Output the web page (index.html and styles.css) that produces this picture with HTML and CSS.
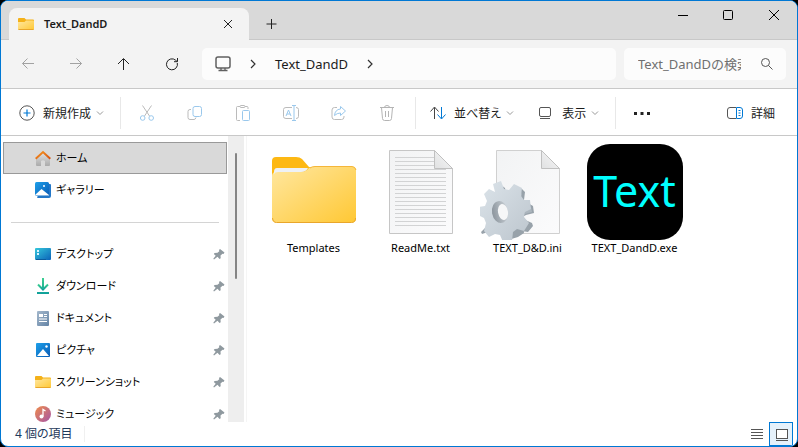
FILE: index.html
```html
<!DOCTYPE html>
<html lang="ja">
<head>
<meta charset="utf-8">
<meta name="viewport" content="width=device-width, initial-scale=1">
<title>Text_DandD</title>
<link rel="stylesheet" href="styles.css">
</head>
<body>
<svg class="defs" aria-hidden="true">
  <defs>
    <linearGradient id="gold" x1="0" y1="0" x2="1" y2="1"><stop offset="0" stop-color="#ffe7a0"/><stop offset="1" stop-color="#ffc834"/></linearGradient>
    <linearGradient id="paper" x1="0" y1="0" x2="1" y2="1"><stop offset="0" stop-color="#f2f3f4"/><stop offset="1" stop-color="#fbfbfc"/></linearGradient>
    <linearGradient id="fold" x1="0" y1="1" x2="1" y2="0"><stop offset="0" stop-color="#e0e1e2"/><stop offset="1" stop-color="#f8f8f8"/></linearGradient>
    <linearGradient id="blue" x1="0" y1="0" x2="1" y2="1"><stop offset="0" stop-color="#1da0ea"/><stop offset="1" stop-color="#0a5bb5"/></linearGradient>
    <linearGradient id="teal" x1="0" y1="0" x2="1" y2="1"><stop offset="0" stop-color="#35c8dc"/><stop offset="1" stop-color="#0b62b8"/></linearGradient>
    <linearGradient id="green" x1="0" y1="0" x2="0" y2="1"><stop offset="0" stop-color="#3ccf91"/><stop offset="1" stop-color="#0f9f9a"/></linearGradient>
    <linearGradient id="slate" x1="0" y1="0" x2="1" y2="1"><stop offset="0" stop-color="#a4b8cc"/><stop offset="1" stop-color="#6484a6"/></linearGradient>
    <linearGradient id="music" x1="0" y1="0" x2="1" y2="1"><stop offset="0" stop-color="#f08c4a"/><stop offset="1" stop-color="#a455a8"/></linearGradient>
    <linearGradient id="wall" x1="0" y1="0" x2="0" y2="1"><stop offset="0" stop-color="#e4e4e4"/><stop offset="1" stop-color="#aaa"/></linearGradient>
    <linearGradient id="roof" x1="0" y1="0" x2="1" y2="1"><stop offset="0" stop-color="#f8961e"/><stop offset="1" stop-color="#d45113"/></linearGradient>
    <linearGradient id="steel" x1="0" y1="0" x2="1" y2="1"><stop offset="0" stop-color="#dce4ea"/><stop offset="1" stop-color="#bcc5cd"/></linearGradient>
    <linearGradient id="hole" x1="0" y1="0" x2="1" y2="0"><stop offset="0" stop-color="#8c959d"/><stop offset="1" stop-color="#c8cfd5"/></linearGradient>
  </defs>
  <symbol id="folder" viewBox="0 0 16 16">
    <path d="M0 3q0-1 1-1h5.500l1.500 1.500H15q1 0 1 1V7H0z" fill="#f4b119" stroke="none"/>
    <path d="M0 6h6.500L8 4.500h7q1 0 1 1V13q0 1-1 1H1q-1 0-1-1z" fill="url(#gold)" stroke="none"/>
    <path d="M.5 13.500h15" stroke="#e9a62b"/>
  </symbol>
  <symbol id="chevron" viewBox="0 0 8 8"><path d="M1 2.500l3 3 3-3" fill="none" stroke="#999"/></symbol>
  <symbol id="arrow" viewBox="0 0 8 12"><path d="M2 2l4 4-4 4" fill="none" stroke="#333" stroke-width="1.200"/></symbol>
  <symbol id="pin" viewBox="0 0 12 12"><path d="M7 1l4.500 3.500-1 1.500-1-.2-2 1.700.2 2.700-1.200.8-2-2.200L1 11.500l-.7-.7 2.400-3L.8 6l.8-1.100 2.900-.1 1.800-1.600-.3-1.200z" fill="#8f999f"/></symbol>
</svg>
<div class="window">
  <header class="titlebar">
    <div class="tab">
      <svg class="icon"><use href="#folder"/></svg>
      <span class="tab-title">Text_DandD</span>
      <button class="tab-close" aria-label="タブを閉じる"><svg class="icon" viewBox="0 0 16 16"><path d="M4 4l8 8M12 4l-8 8"/></svg></button>
    </div>
    <button class="new-tab" aria-label="新しいタブ"><svg class="icon" viewBox="0 0 16 16"><path d="M7.500 3v10M2.500 8h10"/></svg></button>
    <div class="caption">
      <button aria-label="最小化"><svg class="icon" viewBox="0 0 16 16"><path d="M4 8.500h10"/></svg></button>
      <button aria-label="最大化"><svg class="icon" viewBox="0 0 16 16"><rect x="3.500" y="3.500" width="9" height="9" rx="1"/></svg></button>
      <button aria-label="閉じる"><svg class="icon" viewBox="0 0 16 16"><path d="M3 3l10 10M13 3L3 13"/></svg></button>
    </div>
  </header>

  <nav class="navbar">
    <button class="nav-button dim" aria-label="戻る" disabled><svg class="icon" viewBox="0 0 16 16"><path d="M14 7.500H2.500M7.500 2.500l-5 5 5 5"/></svg></button>
    <button class="nav-button dim" aria-label="進む" disabled><svg class="icon" viewBox="0 0 16 16"><path d="M2 7.500h11.500M8.500 2.500l5 5-5 5"/></svg></button>
    <button class="nav-button" aria-label="上へ"><svg class="icon" viewBox="0 0 16 16"><path d="M7.500 14V3M2 8l5.500-5.500L13 8"/></svg></button>
    <button class="nav-button" aria-label="最新の情報に更新"><svg class="icon" viewBox="0 0 16 16"><path d="M13.300 7a5.500 5.500 0 1 1-1.700-2.800L13 5.500M13.500 2v3.700H10"/></svg></button>
    <div class="address">
      <svg class="icon" viewBox="0 0 16 16"><rect x="1" y="1" width="14" height="11" rx="2" stroke="#606060" stroke-width="1.500"/><path d="M6 12v2.500M10 12v2.500M3.500 14.500h9" stroke="#606060" stroke-width="1.300"/></svg>
      <svg class="crumb-arrow"><use href="#arrow"/></svg>
      <a class="crumb" href="#">Text_DandD</a>
      <svg class="crumb-arrow"><use href="#arrow"/></svg>
    </div>
    <div class="search">
      <input type="text" aria-label="検索" placeholder="Text_DandDの検索">
      <svg class="icon" viewBox="0 0 16 16"><circle cx="6.500" cy="6.500" r="4"/><path d="M9.500 9.500l4 4"/></svg>
    </div>
  </nav>

  <div class="toolbar">
    <button class="command"><svg class="icon" viewBox="0 0 16 16"><circle cx="8" cy="8" r="7.200" stroke="#555"/><path d="M8 4.500v7M4.500 8h7" stroke="#0078d4" stroke-width="1.200"/></svg><span>新規作成</span><svg class="chevron"><use href="#chevron"/></svg></button>
    <span class="separator"></span>
    <button class="tool" aria-label="切り取り" disabled><svg class="icon" viewBox="0 0 16 16"><path d="M3.500.5l7 10.500M12.500.5L5.500 11" stroke="#bbb"/><circle cx="3.700" cy="13" r="2.300" stroke="#9ac8ec"/><circle cx="12.200" cy="13" r="2.300" stroke="#9ac8ec"/></svg></button>
    <button class="tool" aria-label="コピー" disabled><svg class="icon" viewBox="0 0 16 16"><path d="M4 4.500H3q-2 0-2 2v6q0 2 2 2h4q1.500 0 2-2" stroke="#bbb"/><rect x="6" y="1.500" width="8.500" height="10" rx="2" stroke="#9ac8ec"/></svg></button>
    <button class="tool" aria-label="貼り付け" disabled><svg class="icon" viewBox="0 0 16 16"><path d="M5 15.500H2.500q-1 0-1-1v-12q0-1 1-1H5M10 1.500h2q1 0 1 1V4" stroke="#bbb"/><rect x="5" y=".5" width="5" height="2" rx="1" stroke="#bbb"/><rect x="7.500" y="5.500" width="7" height="10" rx="1" stroke="#9ac8ec"/></svg></button>
    <button class="tool" aria-label="名前の変更" disabled><svg class="icon" viewBox="0 0 16 16"><path d="M9 2.500H3q-2.500 0-2.500 2v7q0 2 2.500 2h6M13 2.500q2.500 0 2.500 2v7q0 2-2.500 2" stroke="#bbb"/><path d="M3 11l2.500-6L8 11M4 9h3M11 1v14M9 .5h4M9 15.500h4" stroke="#9ac8ec"/></svg></button>
    <button class="tool" aria-label="共有" disabled><svg class="icon" viewBox="0 0 16 16"><path d="M6 2.500H3.500Q1 2.500 1 5v7q0 2.500 2.500 2.500h7Q13 14.500 13 12v-1" stroke="#bbb"/><path d="M9.500 1.500l5 4.500-5 4.500V8Q6 8 3.500 10.500 4 4.500 9.500 4z" stroke="#9ac8ec"/></svg></button>
    <button class="tool" aria-label="削除" disabled><svg class="icon" viewBox="0 0 16 16"><path d="M1 2.500h14M5.500 2.500q0-2 2.500-2t2.500 2M2.500 2.500l1 11q.2 2 2 2h5q1.800 0 2-2l1-11M6.500 6v6M9.500 6v6" stroke="#b4b4b4"/></svg></button>
    <span class="separator"></span>
    <button class="command"><svg class="icon" viewBox="0 0 16 16"><path d="M4.500 14V2.500M.5 6.500l4-4.500 4 4.500" stroke="#444"/><path d="M11.500 2v11.500M7.500 9.500l4 4.500 4-4.500" stroke="#0078d4"/></svg><span>並べ替え</span><svg class="chevron"><use href="#chevron"/></svg></button>
    <button class="command"><svg class="icon" viewBox="0 0 16 16"><rect x="1.500" y="2.500" width="11" height="9" rx="1.500" stroke="#555"/><path d="M2 13.500h10" stroke="#555"/></svg><span>表示</span><svg class="chevron"><use href="#chevron"/></svg></button>
    <span class="separator"></span>
    <button class="tool" aria-label="もっと見る"><svg class="icon" viewBox="0 0 16 16"><path d="M0 7h3v3H0zM6.500 7h3v3h-3zM13 7h3v3h-3z" fill="#222" stroke="none"/></svg></button>
    <button class="command details"><svg class="icon" viewBox="0 0 16 16"><path d="M9 2.500H3q-2.500 0-2.500 2.500v6q0 2.500 2.500 2.500h6" stroke="#555"/><path d="M9.500 2.500H13q2.500 0 2.500 2.500v6q0 2.500-2.500 2.500H9.500zM11.500 5.500h2M11.500 8h2M11.500 10.500h2" stroke="#0078d4"/></svg><span>詳細</span></button>
  </div>

  <div class="content">
    <aside class="sidebar">
      <div class="places">
        <a class="place selected" href="#"><svg class="icon" viewBox="0 0 16 16"><path d="M1 8l7-6 7 6v7q0 1-1 1h-4v-5q-2-1.500-4 0v5H2q-1 0-1-1z" fill="url(#wall)" stroke="none"/><path d="M.7 8.800L8 2l7.300 6.800" stroke="url(#roof)" stroke-width="2"/></svg><span>ホーム</span></a>
        <a class="place" href="#"><svg class="icon" viewBox="0 0 16 16"><path d="M14 2h1q1 0 1 1v11q0 2-2 2H3q-1 0-1-1z" fill="#2377c8" stroke="none"/><rect width="14" height="14" rx="1.500" fill="url(#blue)" stroke="none"/><path d="M0 13l6.500-6L14 13v.5H0z" fill="#fff" stroke="none"/><circle cx="9" cy="4" r="1" fill="#fff" stroke="none"/></svg><span>ギャラリー</span></a>
        <hr class="divider">
        <a class="place" href="#"><svg class="icon" viewBox="0 0 16 16"><rect y="2" width="16" height="12" rx="1" fill="url(#teal)" stroke="none"/><path d="M2 4h2v2H2zM2 7h2v2H2z" fill="#d8f4ff" stroke="none"/><path d="M1 13.500h10" stroke="#0b5c9e"/></svg><span>デスクトップ</span><svg class="pin"><use href="#pin"/></svg></a>
        <a class="place" href="#"><svg class="icon" viewBox="0 0 16 16"><path d="M3 6.500l5 5 5-5" stroke="url(#green)" stroke-width="2"/><path d="M2 14h12v2H2zM7 0h2v11H7z" fill="url(#green)" stroke="none"/></svg><span>ダウンロード</span><svg class="pin"><use href="#pin"/></svg></a>
        <a class="place" href="#"><svg class="icon" viewBox="0 0 16 16"><rect x="2" y="1" width="12" height="15" rx="1" fill="url(#slate)" stroke="none"/><path d="M4 4h4v3H4zM9 4h3v1H9zM9 6h3v1H9zM4 8.500h8v1H4zM4 11h8v1H4z" fill="#fff" stroke="none"/></svg><span>ドキュメント</span><svg class="pin"><use href="#pin"/></svg></a>
        <a class="place" href="#"><svg class="icon" viewBox="0 0 16 16"><rect x="1" y="1" width="14" height="14" rx="1" fill="url(#blue)" stroke="none"/><path d="M2 14l6-7 6 7z" fill="#fff" stroke="none"/><circle cx="11.500" cy="4.500" r="1.200" fill="#fff" stroke="none"/></svg><span>ピクチャ</span><svg class="pin"><use href="#pin"/></svg></a>
        <a class="place" href="#"><svg class="icon"><use href="#folder"/></svg><span>スクリーンショット</span><svg class="pin"><use href="#pin"/></svg></a>
        <a class="place" href="#"><svg class="icon" viewBox="0 0 16 16"><circle cx="8" cy="8" r="8" fill="url(#music)" stroke="none"/><circle cx="6.500" cy="10.500" r="2" fill="#fff" stroke="none"/><path d="M8 10.500V3.500L10.500 5" stroke="#fff" stroke-width="1.300"/></svg><span>ミュージック</span><svg class="pin"><use href="#pin"/></svg></a>
      </div>
      <div class="scrollbar"><div class="thumb"></div></div>
    </aside>
    <main class="files">
      <a class="file" href="#">
        <svg class="picture" viewBox="0 0 96 96"><path d="M6 17q0-4 4-4h20q4 0 6 2l7 8h43q4 0 4 4v10H6z" fill="#fdb813"/><path d="M6 32q0-4 4-4h25q4 0 6-2l2-2q2-1.500 5-1.500h38q4 0 4 4v48q0 4-4 4H10q-4 0-4-4z" fill="url(#gold)"/><path d="M8 30v-2q0-4 3-4h31q-2 4-7 4H12q-3 0-4 2z" fill="#eef1f6"/><path d="M6.500 74q.5 4.500 4 4.500h75q4 0 4-4.500" fill="none" stroke="#e9a62b"/><path d="M44 24q2-1.500 5-1.500h37q3 0 4 3.500" fill="none" stroke="#f5b63a"/></svg>
        <span>Templates</span>
      </a>
      <a class="file" href="#">
        <svg class="picture" viewBox="0 0 96 96"><path d="M16.500 6.500h45l18 18v65h-63z" fill="url(#paper)" stroke="#c6c6c6"/><path d="M22 13.500h40M22 17.500h40M22 21.500h40M22 25.500h51M22 29.500h51M22 33.500h51M22 37.500h51M22 41.500h51M22 45.500h51M22 49.500h51M22 53.500h51M22 57.500h51M22 61.500h51M22 65.500h51M22 69.500h51M22 73.500h51M22 77.500h51M22 81.500h51" stroke="#d2d3d4"/><path d="M61.500 6.500v18h18z" fill="url(#fold)" stroke="#c0c0c0"/></svg>
        <span>ReadMe.txt</span>
      </a>
      <a class="file" href="#">
        <svg class="picture" viewBox="0 0 96 96"><path d="M16.500 6.500h45l18 18v65h-63z" fill="url(#paper)" stroke="#d0d0d0"/><path d="M61.500 6.500v18h18z" fill="url(#fold)" stroke="#c0c0c0"/>
          <path d="M16 43l5-2 4 3 2 9-6-1zM32 49l2-5 8 1 3 3-1 8-6 2zM39 62l9-3 5 3 1 7-8 2-5 3zM38 79l5-4 9 4 1 3-5 6-6-1-4-5zM28 87l3-4 12-1 1 7-6 4-10 3zM8 88l-6 2-1-2 6-6z" fill="#98a2aa"/>
          <path d="M36 47l5 1 1 3-2 6-4-1zM45 65l6-2 1 5-7 2z" fill="#abb5bd"/>
          <path d="M11 46l8-3 3 8 5 1 5-6 8 4-1 8 3 4 6 0 1 9-6 3-1 5 5 6-5 8-7-2-4 3-1 9-9 1-3-7-5-1-6 3-5-6 2-8-2-5-6-3 1-8 6-1 2-5-3-7 5-5 6 3z" transform="translate(2 -6)" fill="url(#steel)"/>
          <ellipse cx="20" cy="68" rx="8" ry="11" transform="rotate(-10 20 68)" fill="url(#hole)"/><ellipse cx="23" cy="68" rx="5" ry="8" transform="rotate(-10 23 68)" fill="#f6f7f8"/></svg>
        <span>TEXT_D&amp;D.ini</span>
      </a>
      <a class="file" href="#">
        <div class="app-icon">Text</div>
        <span>TEXT_DandD.exe</span>
      </a>
    </main>
  </div>

  <footer class="statusbar">
    <span class="count">4 個の項目</span>
    <div class="views">
      <button aria-label="詳細表示"><svg class="icon" viewBox="0 0 16 16"><path d="M2 3.500h12M2 6.500h12M2 9.500h12M2 12.500h12" stroke="#555"/></svg></button>
      <button class="active" aria-label="大きい縮小版"><svg class="icon" viewBox="0 0 16 16"><rect x="3.500" y="3.500" width="11" height="9" fill="#fff" stroke="#555"/><path d="M3 14.500h12" stroke="#555"/></svg></button>
    </div>
  </footer>
</div>
</body>
</html>
```
FILE: styles.css
```css
* { box-sizing: border-box; }

body {
  margin: 0;
  background: #000;
  color: #1b1b1b;
  font: 12px/16px "Noto Sans", "Noto Sans CJK JP", sans-serif;
}

button {
  display: flex;
  align-items: center;
  justify-content: center;
  padding: 0;
  border: 0;
  background: none;
  color: inherit;
  font: inherit;
}

a { color: inherit; text-decoration: none; }

.defs { position: absolute; width: 0; height: 0; }

.icon {
  flex: none;
  width: 16px;
  height: 16px;
  fill: none;
  stroke: #222;
}

.window {
  display: flex;
  flex-direction: column;
  height: 100vh;
  border: 1px solid #0078d4;
  border-radius: 8px;
  background: #fff;
  overflow: hidden;
}

.titlebar {
  display: flex;
  flex: none;
  height: 39px;
  padding-left: 8px;
  background: #d9d9d9;
  box-shadow: inset 0 -1px #c8c8c8;
}

.tab {
  display: flex;
  align-items: center;
  gap: 10px;
  width: 240px;
  margin-top: 7px;
  padding: 0 13px 0 9px;
  border-radius: 8px 8px 0 0;
  background: #f3f3f3;
}

.tab-title { flex: 1; font-size: 11px; font-weight: 600; }

.new-tab { width: 46px; padding-top: 7px; }

.caption { display: flex; height: 28px; margin-left: auto; }
.caption button { width: 46px; }
.caption .icon { stroke: #000; }

.navbar {
  display: flex;
  flex: none;
  align-items: center;
  height: 49px;
  padding: 0 11px 0 3px;
  border-bottom: 1px solid #c8c8c8;
  background: #f3f3f3;
}

.nav-button { width: 48px; height: 32px; }
.dim .icon { stroke: #a2a2a2; }

.address {
  display: flex;
  flex: 1;
  align-items: center;
  height: 32px;
  margin: 0 8px 0 6px;
  padding-left: 13px;
  border-radius: 5px;
  background: #fcfcfc;
}

.crumb-arrow { width: 8px; height: 12px; margin: 0 18px; }
.crumb { font-size: 13px; }

.search {
  display: flex;
  align-items: center;
  gap: 18px;
  width: 162px;
  height: 32px;
  padding: 0 11px 0 14px;
  border-radius: 5px;
  background: #fcfcfc;
}

.search input {
  flex: 1;
  min-width: 0;
  height: 24px;
  padding: 0;
  border: 0;
  outline: 0;
  background: none;
  font: 13px/24px "Noto Sans", "Noto Sans CJK JP", sans-serif;
}

.search input::placeholder { color: #707070; }
.search .icon { stroke: #555; }

.toolbar {
  display: flex;
  flex: none;
  align-items: center;
  height: 47px;
  padding: 2px 22px 0 6px;
  border-bottom: 1px solid #c8c8c8;
  font-feature-settings: "palt";
}

.command { gap: 8px; height: 32px; padding: 0 12px; }
.command span { padding-top: 2px; }
.command .chevron { margin-left: -3px; }
.chevron { width: 8px; height: 8px; }
.tool { width: 48px; height: 32px; }
.separator { width: 1px; height: 32px; margin: 0 2px 0 4px; background: #e8e8e8; }
.details { margin-left: auto; padding: 0; }

.content { display: flex; flex: 1; min-height: 0; }

.sidebar {
  display: flex;
  flex: none;
  width: 246px;
  border-right: 1px solid #f5f5f5;
  padding-right: 2px;
}

.places { flex: 1; overflow: hidden; padding: 6px 1px 0 2px; }

.place {
  display: flex;
  align-items: center;
  gap: 5px;
  height: 32px;
  padding: 0 1px 0 31px;
  border: 1px solid transparent;
  color: #000;
  font-size: 11px;
  font-feature-settings: "palt";
}

.place.selected { border-color: #999; background: #d9d9d9; }

.divider {
  height: 1px;
  margin: 16px 8px 15px;
  border: 0;
  background: #d4d4d4;
}

.pin { width: 12px; height: 12px; margin-left: auto; }

.scrollbar { width: 16px; padding: 17px 7px; background: #eee; }
.thumb { width: 2px; height: 126px; border-radius: 1px; background: #858585; }

.files {
  display: flex;
  flex: 1;
  flex-wrap: wrap;
  align-content: flex-start;
  padding: 8px 13px;
}

.file {
  display: flex;
  flex-direction: column;
  align-items: center;
  width: 107px;
  color: #000;
  font-size: 11px;
}

.picture { width: 96px; height: 96px; }

.app-icon {
  width: 96px;
  height: 96px;
  border-radius: 23px;
  background: #000;
  color: #0ff;
  font: 43px/94px "Noto Sans", sans-serif;
  text-align: center;
}

.statusbar {
  display: flex;
  flex: none;
  align-items: center;
  justify-content: space-between;
  height: 24px;
  padding: 0 4px 0 14px;
  color: #1e395b;
  font-feature-settings: "palt";
}

.count { padding-right: 11px; border-right: 1px solid #f0f0f0; }
.views { display: flex; }
.views button { width: 24px; height: 24px; }
.views .active { border: 1px solid #0078d4; background: #e5f1fb; }
```
